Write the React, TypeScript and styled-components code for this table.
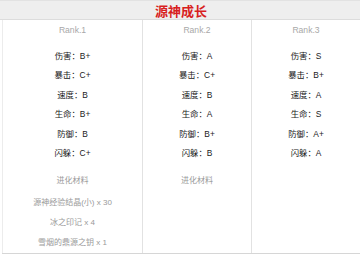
import React from "react";
import styled, { createGlobalStyle } from "styled-components";

const Global = createGlobalStyle`
  html, body { margin: 0; padding: 0; background: #fff; }
  body { font-family: "Liberation Sans", "Noto Sans CJK SC", sans-serif; width: 360px; height: 255px; overflow: hidden; }
`;

const Panel = styled.div`
  width: 360px;
  height: 255px;
  display: flex;
  flex-direction: column;
  box-sizing: border-box;
`;

const Header = styled.div`
  height: 20px;
  background: #eeeeee;
  border-top: 1px solid #e2e2e2;
  border-bottom: 1px solid #dcdcdc;
  box-sizing: border-box;
  display: flex;
  align-items: center;
  justify-content: center;
  padding-left: 2px;
`;

const Title = styled.h1`
  margin: 0;
  font-family: "Noto Sans CJK SC", sans-serif;
  font-size: 13px;
  line-height: 1;
  font-weight: 700;
  color: #d81e1e;
`;

const Body = styled.div`
  display: grid;
  grid-template-columns: 140px 109px 109px;
  margin-left: 2px;
  height: 234px;
  border-bottom: 1px solid #d6d6d6;
  box-sizing: border-box;
`;

const Column = styled.div<{ $first?: boolean }>`
  display: flex;
  flex-direction: column;
  align-items: center;
  border-left: 1px solid ${(p) => (p.$first ? "#ececec" : "#e2e2e2")};
  font-size: 8.4px;
`;

const Rank = styled.div`
  height: 20px;
  line-height: 20px;
  color: #a8a8a8;
  font-size: 8.6px;
  margin-bottom: 6.5px;
`;

const Stat = styled.div`
  height: 19.6px;
  line-height: 19.6px;
  color: #222;
  font-family: "Liberation Sans", "Noto Sans CJK SC", sans-serif;
`;

const Mat = styled.div<{ $gap: number }>`
  height: 20px;
  line-height: 20px;
  margin-top: ${(p) => p.$gap}px;
  color: #9a9a9a;
  font-family: "Liberation Sans", "Noto Sans CJK SC", sans-serif;
  font-size: 8px;
`;

type Col = { rank: string; stats: [string, string][]; mats?: string[]; showEvo: boolean };

const cols: Col[] = [
  {
    rank: "Rank.1",
    stats: [["伤害", "B+"], ["暴击", "C+"], ["速度", "B"], ["生命", "B+"], ["防御", "B"], ["闪躲", "C+"]],
    mats: ["源神经验结晶(小) x 30", "冰之印记 x 4", "雪烟的鼎源之钥 x 1"],
    showEvo: true,
  },
  {
    rank: "Rank.2",
    stats: [["伤害", "A"], ["暴击", "C+"], ["速度", "B"], ["生命", "A"], ["防御", "B+"], ["闪躲", "B"]],
    showEvo: true,
  },
  {
    rank: "Rank.3",
    stats: [["伤害", "S"], ["暴击", "B+"], ["速度", "A"], ["生命", "S"], ["防御", "A+"], ["闪躲", "A"]],
    showEvo: false,
  },
];

export default function App() {
  return (
    <>
      <Global />
      <Panel>
        <Header>
          <Title>源神成长</Title>
        </Header>
        <Body>
          {cols.map((c, i) => (
            <Column key={c.rank} $first={i === 0}>
              <Rank>{c.rank}</Rank>
              {c.stats.map(([k, v]) => (
                <Stat key={k}>
                  {k}：{v}
                </Stat>
              ))}
              {c.showEvo && <Mat $gap={6.5}>进化材料</Mat>}
              {c.mats?.map((m) => (
                <Mat key={m} $gap={m.startsWith("源神") ? 2 : 0}>
                  {m}
                </Mat>
              ))}
            </Column>
          ))}
        </Body>
      </Panel>
    </>
  );
}
